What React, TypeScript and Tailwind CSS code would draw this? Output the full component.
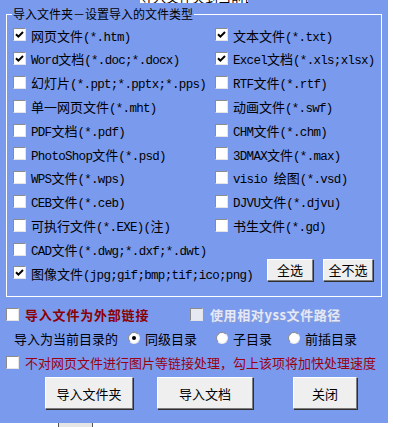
import React from "react";

type Item = { label: string; checked?: boolean };

const leftItems: Item[] = [
  { label: "网页文件(*.htm)", checked: true },
  { label: "Word文档(*.doc;*.docx)", checked: true },
  { label: "幻灯片(*.ppt;*.pptx;*.pps)" },
  { label: "单一网页文件(*.mht)" },
  { label: "PDF文档(*.pdf)" },
  { label: "PhotoShop文件(*.psd)" },
  { label: "WPS文件(*.wps)" },
  { label: "CEB文件(*.ceb)" },
  { label: "可执行文件(*.EXE)(注)" },
  { label: "CAD文件(*.dwg;*.dxf;*.dwt)" },
];

const rightItems: Item[] = [
  { label: "文本文件(*.txt)", checked: true },
  { label: "Excel文档(*.xls;xlsx)", checked: true },
  { label: "RTF文件(*.rtf)" },
  { label: "动画文件(*.swf)" },
  { label: "CHM文件(*.chm)" },
  { label: "3DMAX文件(*.max)" },
  { label: "visio 绘图(*.vsd)" },
  { label: "DJVU文件(*.djvu)" },
  { label: "书生文件(*.gd)" },
];

// SimSun-like mix: narrow monospace latin, wider CJK
function Mixed({ text }: { text: string }) {
  const parts = text.split(/([\x00-\x7f]+)/).filter(Boolean);
  return (
    <span className="whitespace-pre leading-none">
      {parts.map((p, i) =>
        /^[\x00-\x7f]+$/.test(p) ? (
          <span key={i} className="font-['Liberation_Mono',monospace] text-[12.5px] tracking-[-0.7px]">
            {p}
          </span>
        ) : (
          <span key={i} className="text-[13px]">
            {p}
          </span>
        )
      )}
    </span>
  );
}

function CheckBox({ checked, disabled }: { checked?: boolean; disabled?: boolean }) {
  return (
    <span
      className={`flex h-[13px] w-[13px] shrink-0 items-center justify-center border border-t-[#8c8c8c] border-l-[#8c8c8c] border-r-[#e4e4e4] border-b-[#e4e4e4] ${
        disabled ? "bg-[#e6e9f2]" : "bg-white"
      }`}
    >
      {checked && (
        <svg width="9" height="9" viewBox="0 0 9 9">
          <path d="M1 4.2 L3.4 6.6 L8 2" fill="none" stroke="#000" strokeWidth="2" />
        </svg>
      )}
    </span>
  );
}

function Radio({ checked }: { checked?: boolean }) {
  return (
    <span className="flex h-[12px] w-[12px] shrink-0 items-center justify-center rounded-full border border-t-[#8c8c8c] border-l-[#8c8c8c] border-r-[#e8e8e8] border-b-[#e8e8e8] bg-white">
      {checked && <span className="h-[4px] w-[4px] rounded-full bg-black" />}
    </span>
  );
}

function Check({ item }: { item: Item }) {
  return (
    <div className="flex h-[23.8px] items-center gap-[5px]">
      <CheckBox checked={item.checked} />
      <Mixed text={item.label} />
    </div>
  );
}

function Btn({ children, className }: { children: React.ReactNode; className: string }) {
  return (
    <button
      className={`flex items-center justify-center border border-t-white border-l-white border-r-[#7c7c7c] border-b-[#7c7c7c] bg-[#efefef] text-[13px] leading-none text-black shadow-[1px_1px_0_#2e2e2e] ${className}`}
    >
      {children}
    </button>
  );
}

export default function App() {
  return (
    <div className="relative flex h-[427px] w-[393px] flex-col overflow-hidden bg-white font-['Noto_Sans_CJK_SC',sans-serif] text-black">
      <div className="flex h-[423px] w-[388px] flex-col bg-[#7a9aee] pt-[5px]">
        <fieldset className="ml-[6px] h-[292px] w-[376px] border border-white">
          <legend className="ml-[5px] pl-[1px] pr-[1px] text-[12px] leading-[18px]">
            导入文件夹－设置导入的文件类型
          </legend>
          <div className="grid grid-cols-[202px_1fr] pl-[6px]">
            <div className="flex flex-col">
              {leftItems.map((it) => (
                <Check key={it.label} item={it} />
              ))}
            </div>
            <div className="flex flex-col">
              {rightItems.map((it) => (
                <Check key={it.label} item={it} />
              ))}
            </div>
            <div className="col-span-2 flex h-[23.8px] items-center">
              <div className="flex items-center gap-[5px]">
                <CheckBox checked />
                <Mixed text="图像文件(jpg;gif;bmp;tif;ico;png)" />
              </div>
              <div className="ml-auto mr-[8px] flex gap-[10px] -translate-y-[3px]">
                <Btn className="h-[22px] w-[46px]">全选</Btn>
                <Btn className="h-[22px] w-[50px]">全不选</Btn>
              </div>
            </div>
          </div>
        </fieldset>

        <div className="mt-[5px] flex h-[24px] items-center pl-[6px]">
          <div className="flex w-[184px] items-center gap-[6px]">
            <CheckBox />
            <span className="text-[13px] font-bold leading-none tracking-[0.8px] text-[#8b0000]">
              导入文件为外部链接
            </span>
          </div>
          <div className="flex items-center gap-[7px]">
            <CheckBox disabled />
            <span className="text-[13px] font-bold leading-none tracking-[0.6px] text-[#e4e9fa] [text-shadow:1px_1px_0_#8d9dcc]">
              使用相对yss文件路径
            </span>
          </div>
        </div>

        <div className="flex h-[24px] items-center pl-[14px] text-[13px] leading-none">
          <span>导入为当前目录的</span>
          <span className="ml-[10px]">
            <Radio checked />
          </span>
          <span className="ml-[5px]">同级目录</span>
          <span className="ml-[19px]">
            <Radio />
          </span>
          <span className="ml-[5px]">子目录</span>
          <span className="ml-[16px]">
            <Radio />
          </span>
          <span className="ml-[5px]">前插目录</span>
        </div>

        <div className="flex h-[24px] items-center gap-[6px] pl-[6px]">
          <CheckBox />
          <span className="text-[13px] leading-none text-[#9a0010]">
            不对网页文件进行图片等链接处理，勾上该项将加快处理速度
          </span>
        </div>

        <div className="mt-[3px] flex">
          <Btn className="ml-[45px] h-[32px] w-[88px]">导入文件夹</Btn>
          <Btn className="ml-[24px] h-[32px] w-[96px]">导入文档</Btn>
          <Btn className="ml-[40px] h-[32px] w-[64px]">关闭</Btn>
        </div>
      </div>
      <div className="ml-[58px] h-[4px] w-[35px] border-x border-[#555] bg-[#e6e6e6]" />
      <div className="absolute left-[140px] top-0 h-[3px] w-[108px] overflow-hidden bg-white">
        <div className="-mt-[10px] whitespace-nowrap text-[13px] leading-none">导入文件夹到当前目录中</div>
      </div>
    </div>
  );
}
